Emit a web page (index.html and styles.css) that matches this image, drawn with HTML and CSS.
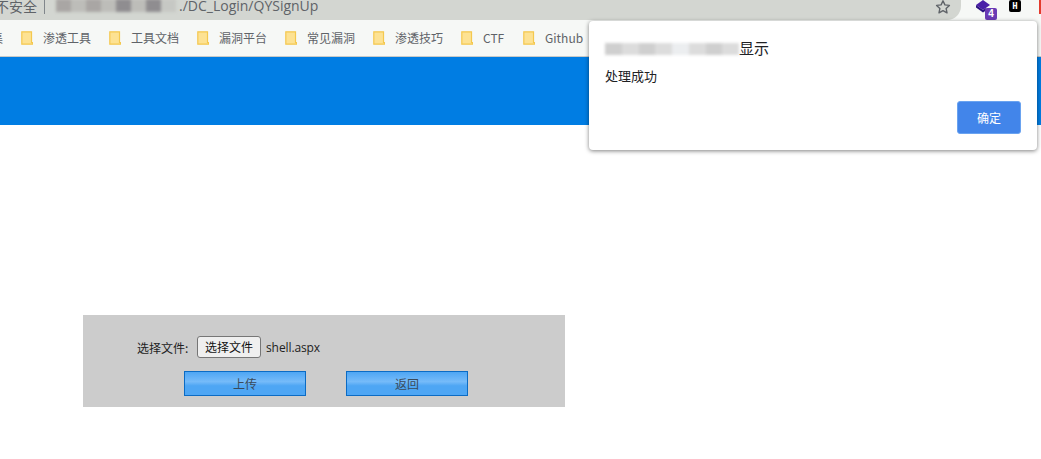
FILE: index.html
```html
<!DOCTYPE html>
<html lang="zh-CN">
<head>
<meta charset="utf-8">
<title>QYSignUp</title>
<link rel="stylesheet" href="styles.css">
</head>
<body>
<div class="toolbar">
  <div class="omnibox">
    <span class="security">不安全</span>
    <span class="sep"></span>
    <span class="blur-url" aria-hidden="true"><i></i><i></i><i></i><i></i><i></i><i></i><i></i><i></i></span>
    <span class="url">./DC_Login/QYSignUp</span>
    <svg class="star" width="16" height="16" viewBox="0 0 16 16"><path d="M8 1.800l1.900 4.100 4.500.5-3.300 3 .9 4.400L8 11.600l-4 2.200.9-4.400-3.300-3 4.500-.5z" fill="none" stroke="#5f6368" stroke-width="1.400" stroke-linejoin="round"/></svg>
  </div>
  <div class="ext ext-stack">
    <svg width="18" height="16" viewBox="0 0 18 16"><path d="M1 5l7-5 7 5-7 5z" fill="#4a1fa8"/><path d="M1 5v2.500l7 5 3-2V8L8 10z" fill="#2c1280"/></svg>
    <span class="badge">4</span>
  </div>
  <div class="ext ext-h"><span>H</span></div>
  <div class="ext-red"></div>
</div>
<nav class="bookmarks">
  <span class="cut">集</span>
  <a class="bm"><svg class="folder" width="12" height="14" viewBox="0 0 12 14"><path d="M.8.800h9.700v10.700h1v1.700H.8z" fill="#fde293" stroke="#f4c84f" stroke-width="1.200"/></svg>渗透工具</a>
  <a class="bm"><svg class="folder" width="12" height="14" viewBox="0 0 12 14"><path d="M.8.800h9.700v10.700h1v1.700H.8z" fill="#fde293" stroke="#f4c84f" stroke-width="1.200"/></svg>工具文档</a>
  <a class="bm"><svg class="folder" width="12" height="14" viewBox="0 0 12 14"><path d="M.8.800h9.700v10.700h1v1.700H.8z" fill="#fde293" stroke="#f4c84f" stroke-width="1.200"/></svg>漏洞平台</a>
  <a class="bm"><svg class="folder" width="12" height="14" viewBox="0 0 12 14"><path d="M.8.800h9.700v10.700h1v1.700H.8z" fill="#fde293" stroke="#f4c84f" stroke-width="1.200"/></svg>常见漏洞</a>
  <a class="bm"><svg class="folder" width="12" height="14" viewBox="0 0 12 14"><path d="M.8.800h9.700v10.700h1v1.700H.8z" fill="#fde293" stroke="#f4c84f" stroke-width="1.200"/></svg>渗透技巧</a>
  <a class="bm bm-ctf"><svg class="folder" width="12" height="14" viewBox="0 0 12 14"><path d="M.8.800h9.700v10.700h1v1.700H.8z" fill="#fde293" stroke="#f4c84f" stroke-width="1.200"/></svg>CTF</a>
  <a class="bm"><svg class="folder" width="12" height="14" viewBox="0 0 12 14"><path d="M.8.800h9.700v10.700h1v1.700H.8z" fill="#fde293" stroke="#f4c84f" stroke-width="1.200"/></svg>Github</a>
</nav>
<header class="banner"></header>
<main class="content">
  <form class="panel">
    <div class="file-row">
      <span class="file-label">选择文件:</span>
      <span class="file-btn">选择文件</span>
      <span class="file-name">shell.aspx</span>
    </div>
    <div class="actions">
      <span class="action">上传</span>
      <span class="action">返回</span>
    </div>
  </form>
</main>
<div class="dialog" role="alertdialog">
  <div class="dialog-title"><span class="blur-host" aria-hidden="true"><i></i><i></i><i></i><i></i><i></i><i></i><i></i><i></i></span><span>显示</span></div>
  <div class="dialog-msg">处理成功</div>
  <div class="dialog-foot"><span class="ok">确定</span></div>
</div>
</body>
</html>
```
FILE: styles.css
```css
* { box-sizing: border-box; }
html, body { margin: 0; padding: 0; }
body {
  width: 1041px;
  height: 459px;
  overflow: hidden;
  background: #fff;
  position: relative;
  font-family: "Liberation Sans", "Noto Sans CJK SC", sans-serif;
  font-size: 12px;
  color: #333;
}
.toolbar {
  height: 20px;
  display: flex;
  background: #f6f8f6;
}
.omnibox {
  width: 961px;
  height: 20px;
  background: #d3d6d1;
  border-bottom-right-radius: 14px;
  display: flex;
  align-items: center;
  overflow: hidden;
  margin-right: 14px;
  flex: none;
}
.security {
  font-family: "Noto Sans CJK SC", sans-serif;
  font-size: 14px;
  line-height: 14px;
  color: #5f6368;
  margin-left: -5px;
  width: 42px;
  white-space: nowrap;
  margin-top: -8px;
}
.sep {
  width: 1px;
  height: 14px;
  background: #80868b;
  margin: -6px 0 0 7px;
}
.blur-url {
  display: flex;
  width: 120px;
  height: 13px;
  margin: -9px 0 0 11px;
  filter: blur(1.500px);
}
.blur-url i { flex: 1; background: #a9a6a4; }
.blur-url i:nth-child(2n) { background: #bdbdb9; }
.blur-url i:nth-child(5), .blur-url i:nth-child(7) { background: #8f8d90; }
.blur-url i:nth-child(8) { background: #c6c8c4; }
.url {
  font-family: "Open Sans", sans-serif;
  font-size: 14px;
  line-height: 14px;
  color: #5f6368;
  margin: -8px 0 0 3px;
  width: 756px;
  white-space: nowrap;
}
.star { margin: -7px 0 0 0; flex: none; }
.ext { position: relative; flex: none; }
.ext-stack { width: 16px; height: 20px; margin-right: 18px; }
.ext-stack svg { display: block; }
.badge {
  position: absolute;
  left: 10px;
  top: 8px;
  width: 12px;
  height: 12px;
  border-radius: 2px;
  background: #6a3ab5;
  color: #fff;
  font-size: 10px;
  font-weight: bold;
  line-height: 12px;
  text-align: center;
}
.ext-h {
  width: 12px;
  height: 12px;
  background: #000;
  border-radius: 2px;
  color: #fff;
  font-family: "DejaVu Sans Mono", monospace;
  font-size: 9px;
  font-weight: bold;
  line-height: 12px;
  text-align: center;
}
.ext-red {
  width: 4px;
  height: 14px;
  margin-left: 18px;
  background: #e33b2e;
  flex: none;
}
.bookmarks {
  height: 37px;
  background: #f6f8f6;
  border-bottom: 1px solid #c8cac8;
  display: flex;
  align-items: center;
  font-family: "Noto Sans CJK SC", sans-serif;
  font-size: 12px;
  color: #5f6368;
  white-space: nowrap;
  overflow: hidden;
  padding-bottom: 1px;
}
.cut { width: 21px; margin-left: -9px; flex: none; margin-right: 9px; }
.bm {
  display: flex;
  align-items: center;
  width: 88px;
  flex: none;
}
.bm-ctf { width: 62px; }
.folder { flex: none; margin-right: 10px; }
.banner { height: 68px; background: #007de3; }
.content { padding: 190px 0 0 83px; }
.panel {
  width: 482px;
  height: 92px;
  background: #ccc;
  font-family: "Noto Sans CJK SC", sans-serif;
  padding: 21px 0 0 54px;
}
.file-row {
  display: flex;
  align-items: center;
  height: 22px;
  color: #222;
}
.file-label { font-size: 12px; width: 60px; }
.file-btn {
  width: 64px;
  height: 22px;
  background: #efefef;
  border: 1px solid #767676;
  border-radius: 3px;
  font-size: 12px;
  line-height: 20px;
  text-align: center;
  color: #111;
}
.file-name {
  font-family: "Open Sans", sans-serif;
  font-size: 12px;
  margin-left: 5px;
  letter-spacing: -.1px;
}
.actions {
  display: flex;
  gap: 40px;
  margin: 13px 0 0 47px;
}
.action {
  width: 122px;
  height: 25px;
  border: 1px solid #0b6bc4;
  background: linear-gradient(#4ea6f4, #76bbf9 42%, #4ea6f4 60%, #4ea6f4);
  font-size: 12px;
  line-height: 24px;
  text-align: center;
  color: #3a4a5a;
}
.dialog {
  position: absolute;
  left: 589px;
  top: 21px;
  width: 448px;
  height: 129px;
  background: #fff;
  border-radius: 4px;
  box-shadow: 0 1px 4px rgba(0, 0, 0, .5);
  padding: 15px 16px 0 16px;
  font-family: "Noto Sans CJK SC", sans-serif;
  color: #202124;
}
.dialog-title {
  display: flex;
  align-items: center;
  height: 22px;
  font-size: 15px;
}
.blur-host {
  display: flex;
  width: 134px;
  height: 12px;
  filter: blur(1.500px);
  margin-top: 4px;
}
.blur-host i { flex: 1; background: #cfcfcf; }
.blur-host i:nth-child(2n) { background: #dcdcdc; }
.blur-host i:nth-child(5) { background: #eceef0; }
.dialog-msg {
  font-size: 13px;
  line-height: 18px;
  margin-top: 9px;
}
.dialog-foot {
  display: flex;
  justify-content: flex-end;
  margin-top: 16px;
}
.ok {
  width: 64px;
  height: 33px;
  background: #4285ea;
  border: 1px solid #6aa3f0;
  border-radius: 3px;
  color: #fff;
  font-size: 12px;
  line-height: 32px;
  text-align: center;
}
```
